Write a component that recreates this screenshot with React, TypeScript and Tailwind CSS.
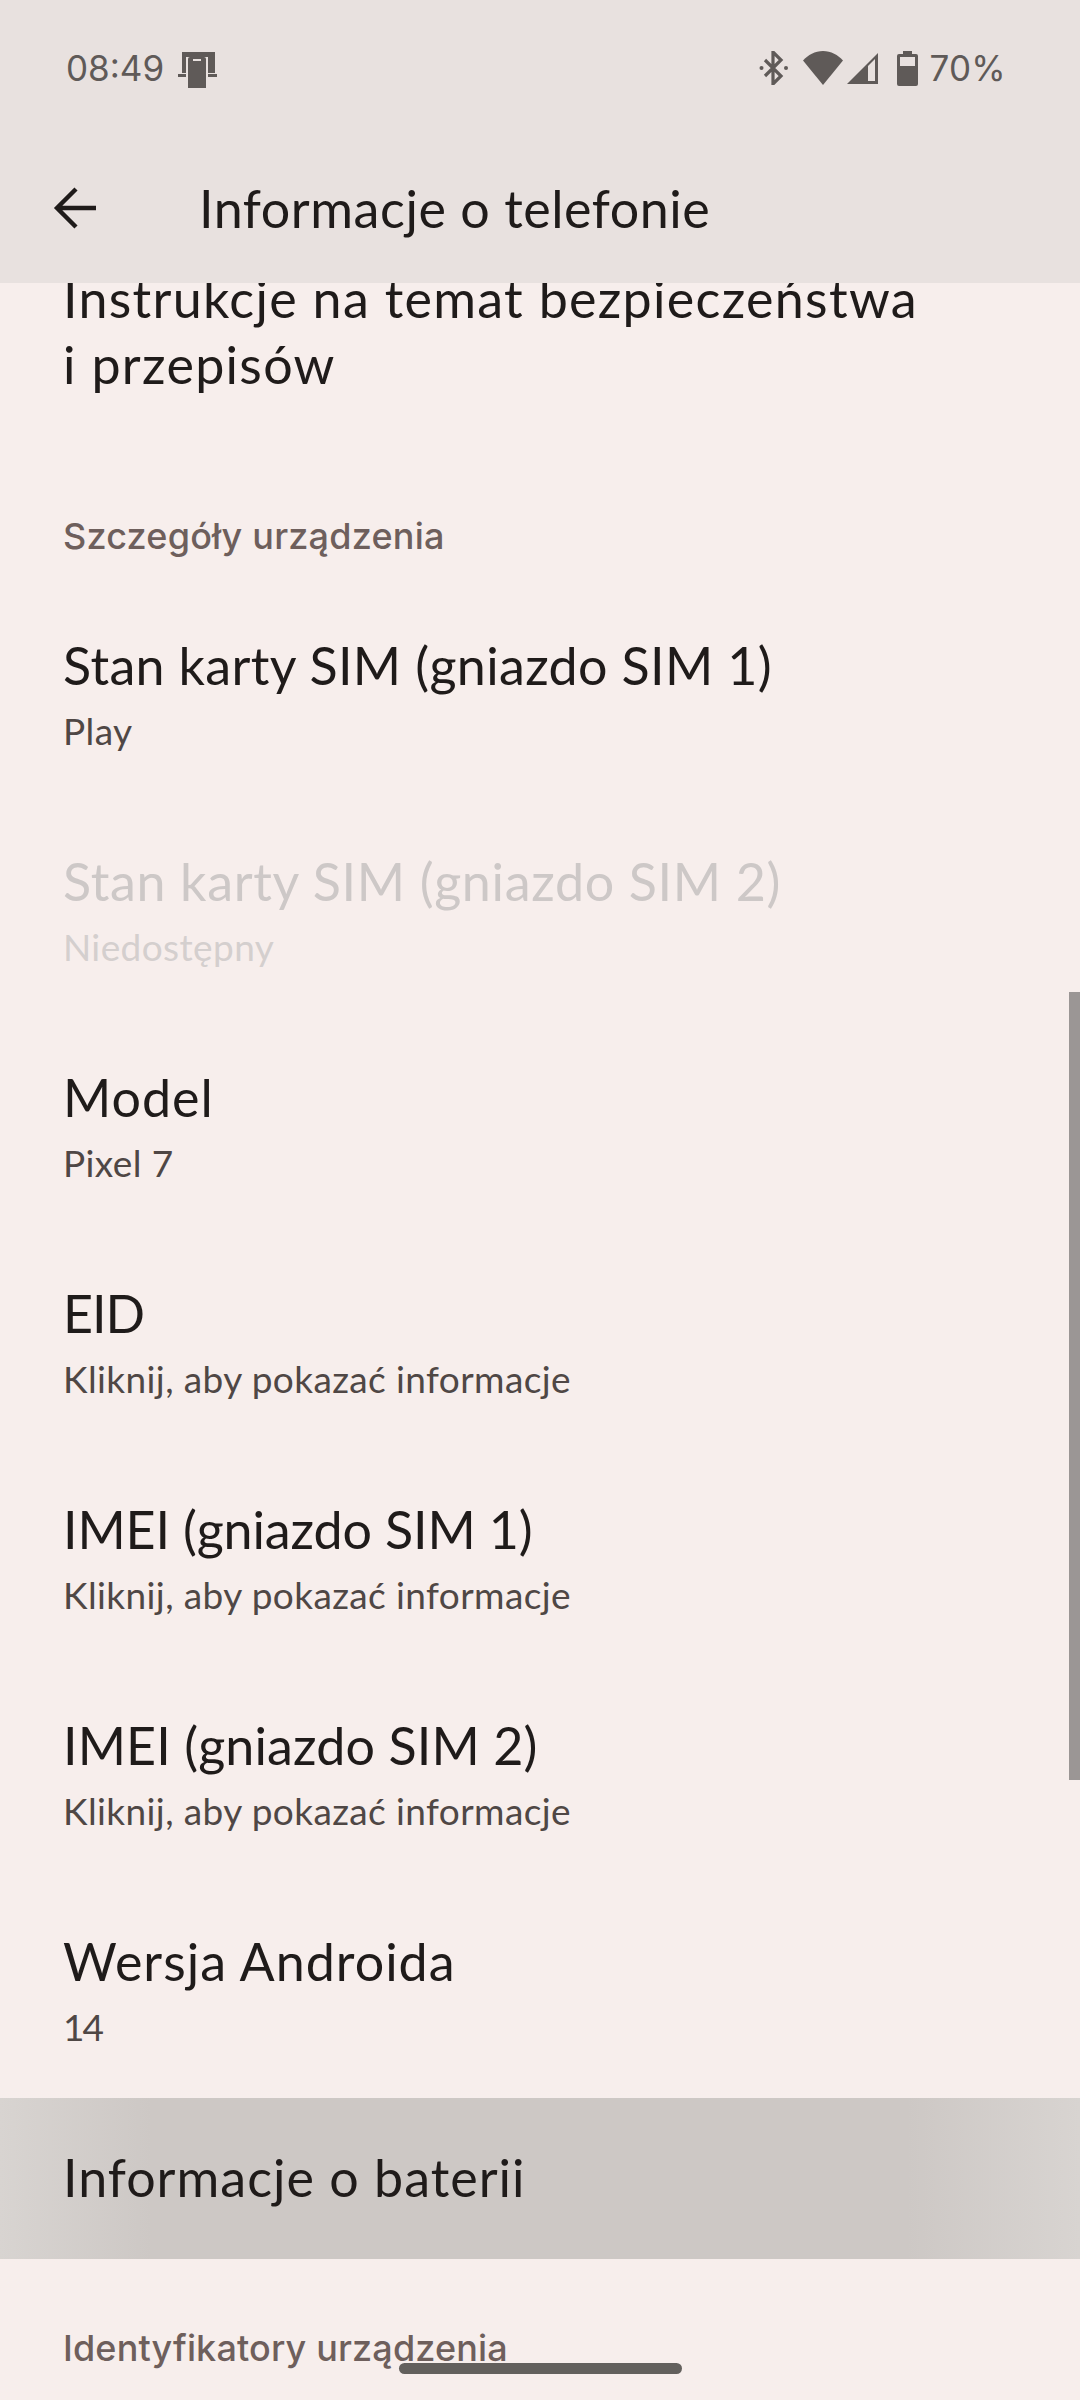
import React from 'react';

const rows = [
  { title: 'Stan karty SIM (gniazdo SIM 1)', sub: 'Play', track: 'tracking-[0.35px]' },
  { title: 'Stan karty SIM (gniazdo SIM 2)', sub: 'Niedostępny', disabled: true, track: 'tracking-[0.65px]' },
  { title: 'Model', sub: 'Pixel 7', track: 'tracking-[1px]' },
  { title: 'EID', sub: 'Kliknij, aby pokazać informacje', track: 'tracking-[-1px]' },
  { title: 'IMEI (gniazdo SIM 1)', sub: 'Kliknij, aby pokazać informacje', track: 'tracking-[-0.15px]' },
  { title: 'IMEI (gniazdo SIM 2)', sub: 'Kliknij, aby pokazać informacje', track: 'tracking-[0.1px]' },
];

const StatusBar = () => (
  <div className="flex items-center h-[136px] pl-[66px] pr-[74px] text-[#5f5a58]">
    <span className="text-[35px] leading-none font-['Inter',sans-serif]">08:49</span>
    {/* telefon nad laptopem */}
    <svg className="ml-[14px] mt-[4px]" width="39" height="36" viewBox="0 0 39 36" fill="currentColor">
      <path d="M4 0h33v21H4z" />
      <path d="M0 22h8v3H0zM30 22h9v3h-9z" />
      <path d="M8 5h22v17H8z" fill="#e8e1df" />
      <path d="M10 7a2 2 0 0 1 2-2h14a2 2 0 0 1 2 2v29H10z" />
      <path d="M15 7h8v2h-8z" fill="#e8e1df" />
    </svg>
    <div className="flex-1" />
    <svg width="30" height="34" viewBox="0 0 30 34" fill="none" stroke="currentColor" strokeWidth="3.2">
      <path d="M6 9l16 16-8 8V1l8 8L6 25" />
      <circle cx="2.5" cy="17" r="2" fill="currentColor" stroke="none" />
      <circle cx="27" cy="17" r="2" fill="currentColor" stroke="none" />
    </svg>
    <svg className="ml-[14px]" width="40" height="34" viewBox="0 0 40 34" fill="currentColor">
      <path d="M20 34L0 9.5C5 4 12 0 20 0s15 4 20 9.5z" />
    </svg>
    <svg className="ml-[3px]" width="33" height="33" viewBox="0 0 33 33">
      <path d="M32 1v31H1z" fill="#5f5a58" />
      <path d="M22 14l7-7v22h-7z" fill="#e8e1df" />
    </svg>
    <svg className="ml-[18px]" width="21" height="35" viewBox="0 0 21 35" fill="currentColor">
      <path d="M6 0h9v3h4a2 2 0 0 1 2 2v28a2 2 0 0 1-2 2H2a2 2 0 0 1-2-2V5a2 2 0 0 1 2-2h4z" />
      <path d="M3 6h15v9H3z" fill="#e8e1df" />
    </svg>
    <span className="ml-[11px] text-[35px] leading-none tracking-[0.3px] font-['Inter',sans-serif]">70%</span>
  </div>
);

const AppBar = () => (
  <div className="flex items-center h-[147px] pl-[53px] pb-[4px]">
    <svg width="43" height="42" viewBox="0 0 43 42" fill="none" stroke="#1f1b1a" strokeWidth="4.4">
      <path d="M43 21H4M23 2L4 21l19 19" />
    </svg>
    <h1 className="ml-[103px] text-[52px] leading-none text-[#1f1b1a] tracking-[0.55px]">Informacje o telefonie</h1>
  </div>
);

const App: React.FC = () => {
  return (
    <div className="relative w-[1080px] h-[2400px] overflow-hidden bg-[#f7eeec] font-['Lato','Liberation_Sans',sans-serif]">
      {/* Header */}
      <div className="relative z-10 h-[283px] bg-[#e8e1df]">
        <StatusBar />
        <AppBar />
      </div>

      {/* Lista */}
      <div className="-mt-[18px]">
        <div className="pl-[63px] text-[52px] leading-[66px] text-[#1f1b1a] tracking-[1.3px]">
          Instrukcje na temat bezpieczeństwa
          <br />i przepisów
        </div>

        <div className="pl-[63px] pt-[115px] pb-[30px] text-[36px] leading-[48px] font-['Inter',sans-serif] font-medium text-[#6e5f5c] tracking-[0.2px]">
          Szczegóły urządzenia
        </div>

        {rows.map((row) => (
          <div key={row.title} className="h-[216px] pl-[63px] flex flex-col justify-center">
            <div className={`text-[52px] leading-[66px] -mt-[9px] ${row.track} ${row.disabled ? 'text-[#cdc8c7]' : 'text-[#1f1b1a]'}`}>
              {row.title}
            </div>
            <div className={`text-[37px] leading-[48px] mt-[9px] tracking-[0.4px] ${row.disabled ? 'text-[#d4cfce]' : 'text-[#4f4745]'}`}>
              {row.sub}
            </div>
          </div>
        ))}

        <div className="h-[212px] pl-[63px] flex flex-col justify-center">
          <div className="text-[52px] leading-[66px] -mt-[5px] text-[#1f1b1a] tracking-[1px]">Wersja Androida</div>
          <div className="text-[37px] leading-[48px] mt-[9px] text-[#4f4745] tracking-[-2px]">14</div>
        </div>

        <div className="h-[161px] pl-[63px] flex items-center bg-[linear-gradient(90deg,#d8d4d1,#cdc8c5_14%,#cdc8c5_84%,#d8d4d1)]">
          <span className="text-[52px] leading-[66px] -mt-[3px] text-[#1f1b1a] tracking-[1px]">Informacje o baterii</span>
        </div>

        <div className="pl-[63px] pt-[65px] text-[36px] leading-[48px] font-['Inter',sans-serif] font-medium text-[#6e5f5c] tracking-[0.15px]">
          Identyfikatory urządzenia
        </div>
      </div>

      {/* Pasek przewijania i gest */}
      <div className="absolute right-0 top-[992px] w-[11px] h-[788px] bg-[#9b9695]" />
      <div className="absolute left-[399px] top-[2363px] w-[283px] h-[11px] rounded-full bg-[#63605d]" />
    </div>
  );
};

export default App;
